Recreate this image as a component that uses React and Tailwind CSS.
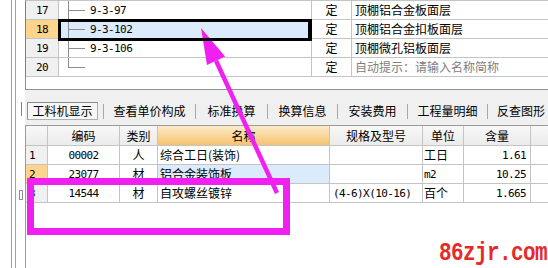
import React from "react";

const MONO = "font-['DejaVu_Sans_Mono',monospace] text-[11px] tracking-[-0.6px]";

function Tree({ last }) {
  return (
    <svg width="18" height="18" className="shrink-0 ml-[9px]">
      <line x1="0.5" y1="0" x2="0.5" y2={last ? 9.5 : 18} stroke="#8c8c8c" strokeWidth="1" />
      <line x1="0" y1="9.5" x2="17" y2="9.5" stroke="#8c8c8c" strokeWidth="1" />
    </svg>
  );
}

function TopRow({ num, code, name, sel, last, hint }) {
  return (
    <div className="flex h-[19px] border-b border-[#c4c4c4]">
      <div
        className={`w-[33px] shrink-0 border-r border-[#c4c4c4] flex items-center justify-center ${MONO} ${
          sel ? "bg-[#fdd48c]" : "bg-[#f0f0f0]"
        }`}
      >
        {num}
      </div>
      <div
        className={`relative w-[253px] shrink-0 border-r border-[#c4c4c4] flex items-center ${
          sel ? "bg-[#dcebfb]" : "bg-white"
        }`}
      >
        <Tree last={last} />
        <span className={`ml-[4px] ${MONO}`}>{code}</span>
        {sel && (
          <div className="absolute z-10 -left-px -top-px -right-px -bottom-[3px] border-[3px] border-black border-r-4" />
        )}
      </div>
      <div className="w-[40px] shrink-0 border-r border-[#c4c4c4] flex items-center justify-center">
        定
      </div>
      <div className={`flex-1 flex items-center pl-[3px] whitespace-nowrap ${hint ? "text-[#808080]" : ""}`}>
        {name}
      </div>
    </div>
  );
}

const COLS = ["w-[22px]", "w-[72px]", "w-[38px]", "w-[172px]", "w-[93px]", "w-[41px]", "w-[67px]"];

function LowRow({ n, code, cat, name, spec, unit, qty, sel }) {
  return (
    <div className="flex h-[19px] border-b border-[#c4c4c4] bg-white">
      <div
        className={`${COLS[0]} shrink-0 border-r border-[#c4c4c4] flex items-center pl-[3px] ${MONO} ${
          sel ? "bg-[#fdd48c]" : "bg-[#f0f0f0]"
        }`}
      >
        {n}
      </div>
      <div className={`${COLS[1]} shrink-0 border-r border-[#c4c4c4] flex items-center justify-center ${MONO}`}>
        {code}
      </div>
      <div className={`${COLS[2]} shrink-0 border-r border-[#c4c4c4] flex items-center justify-center`}>{cat}</div>
      <div
        className={`${COLS[3]} shrink-0 border-r border-[#c4c4c4] flex items-center pl-[2px] whitespace-nowrap ${
          sel ? "bg-[#dcebfb]" : ""
        }`}
      >
        {name}
      </div>
      <div className={`${COLS[4]} shrink-0 border-r border-[#c4c4c4] flex items-center pl-[3px] ${MONO}`}>
        {spec}
      </div>
      <div className={`${COLS[5]} shrink-0 border-r border-[#c4c4c4] flex items-center pl-[1px]`}>
        {unit === "m2" ? <span className={MONO}>m2</span> : unit}
      </div>
      <div className={`${COLS[6]} shrink-0 border-r border-[#c4c4c4] flex items-center justify-end pr-[4px] ${MONO}`}>
        {qty}
      </div>
      <div className="flex-1" />
    </div>
  );
}

function Sep() {
  return <div className="w-px h-[15px] bg-[#a8a8a8] shrink-0" />;
}

export default function App() {
  // arrow geometry
  const tip = [201, 28];
  const end = [277, 193];
  const dx = end[0] - tip[0];
  const dy = end[1] - tip[1];
  const L = Math.hypot(dx, dy);
  const u = [dx / L, dy / L];
  const p = [-u[1], u[0]];
  const hl = 36;
  const hw = 10;
  const base = [tip[0] + u[0] * hl, tip[1] + u[1] * hl];
  const c1 = [base[0] + p[0] * hw, base[1] + p[1] * hw];
  const c2 = [base[0] - p[0] * hw, base[1] - p[1] * hw];

  return (
    <div className="relative w-[548px] h-[268px] overflow-hidden bg-white flex text-black text-[12px] leading-none font-['Noto_Sans_CJK_SC',sans-serif]">
      {/* left gutter */}
      <div className="w-[25px] shrink-0 flex h-full">
        <div className="w-[11px]" />
        <div className="w-[5px] h-full border-x border-[#a0a0a0]" />
        <div className="w-[9px] flex flex-col">
          <div className="mt-[102px] ml-[5px] w-px h-[14px] bg-[#808080]" />
          <div className="mt-[74px] ml-[3px] w-[4px] h-[10px] border border-[#909090]" />
        </div>
      </div>

      {/* main */}
      <div className="flex-1 flex flex-col">
        <div className="border-l border-t border-[#808080] border-t-[#c4c4c4]">
          <TopRow num="17" code="9-3-97" name="顶棚铝合金板面层" />
          <TopRow num="18" code="9-3-102" name="顶棚铝合金扣板面层" sel />
          <TopRow num="19" code="9-3-106" name="顶棚微孔铝板面层" />
          <TopRow num="20" code="" name="自动提示：请输入名称简称" last hint />
        </div>
        <div className="h-[13px] border-l border-b border-[#909090] bg-white" />
        <div className="h-[12px] bg-[#f0f0f0]" />
        {/* tabs */}
        <div className="h-[18px] bg-[#f0f0f0] flex items-center whitespace-nowrap">
          <div className="ml-[2px] w-[71px] h-[18px] shrink-0 border border-[#8c8c8c] border-r-[#b0b0b0] border-b-[#b0b0b0] bg-[#f7f7f7] flex items-center justify-center">
            工料机显示
          </div>
          <div className="w-[5px] shrink-0" />
          <Sep />
          <div className="w-[91px] shrink-0 text-center">查看单价构成</div>
          <Sep />
          <div className="w-[71px] shrink-0 text-center">标准换算</div>
          <Sep />
          <div className="w-[69px] shrink-0 text-center">换算信息</div>
          <Sep />
          <div className="w-[69px] shrink-0 text-center">安装费用</div>
          <Sep />
          <div className="w-[79px] shrink-0 text-center">工程量明细</div>
          <Sep />
          <div className="pl-[9px]">反查图形</div>
        </div>
        <div className="h-[5px] bg-[#f0f0f0]" />
        {/* lower table */}
        <div className="flex-1 flex flex-col border-l border-t border-[#9a9a9a] bg-white">
          <div className="flex h-[20px] border-b border-[#c4c4c4] bg-linear-to-b from-[#f8f8f8] to-[#ebebeb]">
            <div className={`${COLS[0]} shrink-0 border-r border-[#c4c4c4]`} />
            <div className={`${COLS[1]} shrink-0 border-r border-[#c4c4c4] flex items-center justify-center`}>编码</div>
            <div className={`${COLS[2]} shrink-0 border-r border-[#c4c4c4] flex items-center justify-center`}>类别</div>
            <div className={`${COLS[3]} shrink-0 border-r border-[#c4c4c4] flex items-center justify-center bg-linear-to-b from-[#fcebc9] to-[#f5c26e]`}>
              名称
            </div>
            <div className={`${COLS[4]} shrink-0 border-r border-[#c4c4c4] flex items-center justify-center`}>规格及型号</div>
            <div className={`${COLS[5]} shrink-0 border-r border-[#c4c4c4] flex items-center justify-center`}>单位</div>
            <div className={`${COLS[6]} shrink-0 border-r border-[#c4c4c4] flex items-center justify-center`}>含量</div>
            <div className="flex-1" />
          </div>
          <LowRow n="1" code="00002" cat="人" name="综合工日(装饰)" spec="" unit="工日" qty="1.61" />
          <LowRow n="2" code="23077" cat="材" name="铝合金装饰板" spec="" unit="m2" qty="10.25" sel />
          <LowRow n="3" code="14544" cat="材" name="自攻螺丝镀锌" spec="(4-6)X(10-16)" unit="百个" qty="1.665" />
          <div className="flex-1 bg-white" />
        </div>
      </div>

      {/* annotation overlays */}
      <div className="absolute left-[27px] top-[178px] w-[263px] h-[57px] border-[7px] border-[#f020f0]" />
      <svg className="absolute left-0 top-0 pointer-events-none" width="548" height="268">
        <line
          x1={base[0]}
          y1={base[1]}
          x2={end[0]}
          y2={end[1]}
          stroke="#f020f0"
          strokeWidth="4.5"
        />
        <polygon points={`${tip[0]},${tip[1]} ${c1[0]},${c1[1]} ${c2[0]},${c2[1]}`} fill="#f020f0" />
      </svg>
      <div className="absolute right-[1px] top-[245px] text-[21px] leading-none tracking-[-0.6px] font-bold text-[#e52a2a] font-['Liberation_Mono',monospace] scale-y-120 origin-bottom">
        86zjr.com
      </div>
    </div>
  );
}
